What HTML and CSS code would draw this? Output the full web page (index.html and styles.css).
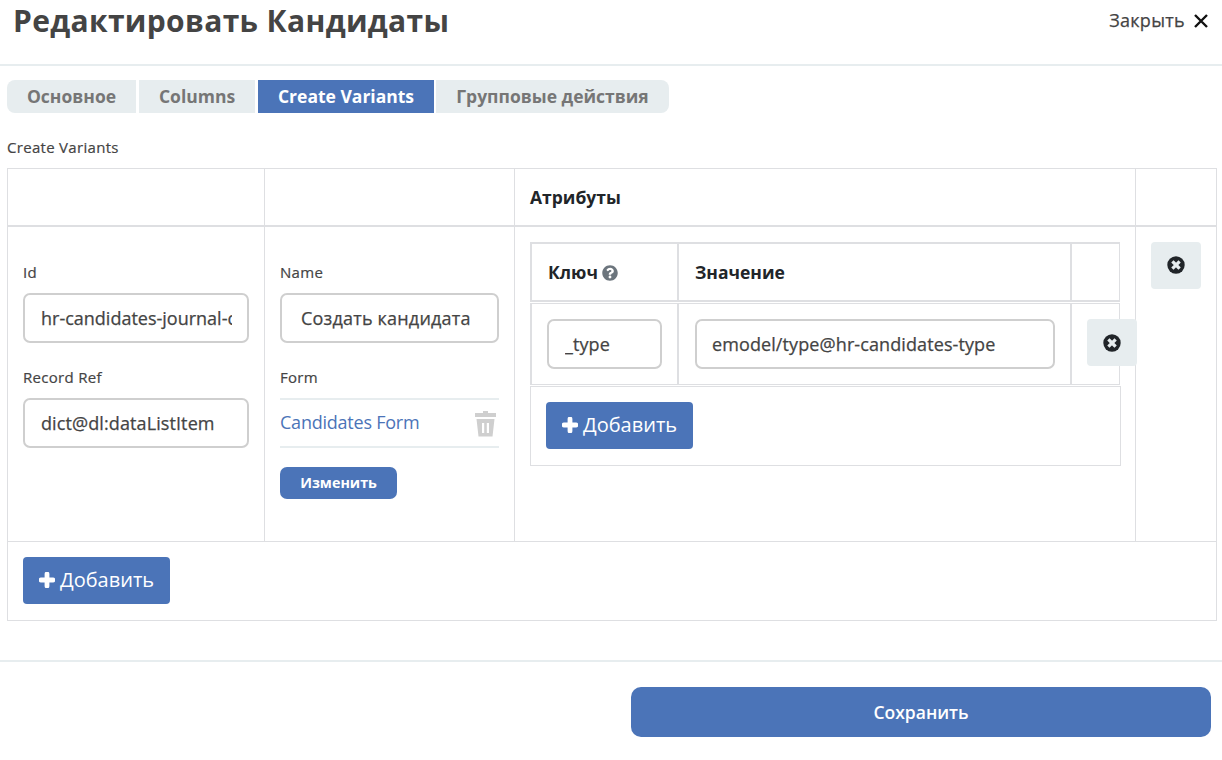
FILE: index.html
```html
<!DOCTYPE html>
<html lang="ru">
<head>
<meta charset="utf-8">
<title>Редактировать Кандидаты</title>
<link rel="stylesheet" href="styles.css">
</head>
<body>
<header class="head">
  <h1 class="title"><span>Редактировать Кандидаты</span></h1>
  <div class="close"><span class="close-text">Закрыть</span>
    <svg class="close-icon" width="14" height="14" viewBox="0 0 14 14"><path d="M1 1 13 13M13 1 1 13" stroke="#111" stroke-width="2.400" fill="none"/></svg>
  </div>
</header>
<nav class="tabs">
  <div class="tab t1"><span>Основное</span></div>
  <div class="tab t2"><span>Columns</span></div>
  <div class="tab t3 active"><span>Create Variants</span></div>
  <div class="tab t4"><span>Групповые действия</span></div>
</nav>
<main class="main">
  <div class="label caption"><span>Create Variants</span></div>
  <section class="grid">
    <div class="row row-head">
      <div class="cell"></div><div class="cell"></div>
      <div class="cell th"><span class="th-attr">Атрибуты</span></div><div class="cell"></div>
    </div>
    <div class="row row-body">
      <div class="cell form">
        <div class="label"><span>Id</span></div>
        <div class="input"><div class="clip"><span class="v-id">hr-candidates-journal-create</span></div></div>
        <div class="label"><span>Record Ref</span></div>
        <div class="input"><div class="clip"><span class="v-ref">dict@dl:dataListItem</span></div></div>
      </div>
      <div class="cell form">
        <div class="label"><span>Name</span></div>
        <div class="input name"><div class="clip"><span class="v-name">Создать кандидата</span></div></div>
        <div class="label"><span>Form</span></div>
        <div class="picked"><span class="link">Candidates Form</span>
          <svg class="trash" width="21" height="26" viewBox="0 0 21 26"><path fill="#cfcfcf" fill-rule="evenodd" d="M8 0h5v2h8v4H0V2h8zM1.500 8h18l-2 17.500h-14zM7 12v10h2.200V12zm4.800 0v10H14V12z"/></svg>
        </div>
        <div class="change"><span>Изменить</span></div>
      </div>
      <div class="cell attrs">
        <div class="inner">
          <div class="irow ihead">
            <div class="icell"><span class="th-key">Ключ</span>
              <svg class="help" width="16" height="16" viewBox="0 0 512 512"><path fill="#6c757d" d="M504 256c0 136.997-111.043 248-248 248S8 392.997 8 256C8 119.083 119.043 8 256 8s248 111.083 248 248zM262.655 90c-54.497 0-89.255 22.957-116.549 63.758-3.536 5.286-2.353 12.415 2.715 16.258l34.699 26.310c5.205 3.947 12.621 3.008 16.665-2.122 17.864-22.658 30.113-35.797 57.303-35.797 20.429 0 45.698 13.148 45.698 32.958 0 14.976-12.363 22.667-32.534 33.976C247.128 238.528 216 254.941 216 296v4c0 6.627 5.373 12 12 12h56c6.627 0 12-5.373 12-12v-1.333c0-28.462 83.186-29.647 83.186-106.667 0-58.002-60.165-102-116.531-102zM256 338c-25.365 0-46 20.635-46 46 0 25.364 20.635 46 46 46s46-20.636 46-46c0-25.365-20.635-46-46-46z"/></svg>
            </div>
            <div class="icell"><span class="th-val">Значение</span></div>
            <div class="icell"></div>
          </div>
          <div class="irow ibody">
            <div class="icell"><div class="input"><div class="clip"><span class="v-type">_type</span></div></div></div>
            <div class="icell value"><div class="input"><div class="clip"><span class="v-val">emodel/type@hr-candidates-type</span></div></div></div>
            <div class="icell"><div class="remove low"><svg width="18" height="18" viewBox="0 0 18 18"><circle cx="9" cy="9" r="8.700" fill="#212529"/><path d="M6.500 6.500l5 5M11.500 6.500l-5 5" stroke="#e7edef" stroke-width="3.200" stroke-linecap="square"/></svg></div></div>
          </div>
          <div class="ifoot"><div class="add"><svg width="16" height="16" viewBox="0 0 16 16"><path d="M8 2v12M2 8h12" stroke="#fff" stroke-width="4.800" stroke-linecap="round"/></svg><span>Добавить</span></div></div>
        </div>
      </div>
      <div class="cell attrs"><div class="remove"><svg width="18" height="18" viewBox="0 0 18 18"><circle cx="9" cy="9" r="8.700" fill="#212529"/><path d="M6.500 6.500l5 5M11.500 6.500l-5 5" stroke="#e7edef" stroke-width="3.200" stroke-linecap="square"/></svg></div></div>
    </div>
    <div class="row-foot"><div class="add"><svg width="16" height="16" viewBox="0 0 16 16"><path d="M8 2v12M2 8h12" stroke="#fff" stroke-width="4.800" stroke-linecap="round"/></svg><span>Добавить</span></div></div>
  </section>
</main>
<footer class="foot"><div class="save"><span>Сохранить</span></div></footer>
</body>
</html>
```
FILE: styles.css
```css
* { box-sizing: border-box; }
body { margin: 0; height: 760px; overflow: hidden; background: #fff; color: #444; font-family: "Open Sans", "Noto Sans", sans-serif; white-space: nowrap; }
svg { display: block; flex: none; }
.head { display: flex; justify-content: space-between; height: 66px; border-bottom: 2px solid #e7edef; padding: 0 14px 0 13px; }
.title { margin: 0; font-size: 30px; letter-spacing: .34px; line-height: 42px; font-weight: 700; }
.close { display: flex; align-items: center; gap: 9px; height: 40px; font-size: 18px; letter-spacing: .3px; -webkit-text-stroke: .25px currentColor; }
.close-icon { margin-top: 1px; }
.tabs { display: flex; padding: 14px 0 0 7px; }
.tab { height: 33px; line-height: 33px; text-align: center; background: #e7edef; color: #767676; font-size: 17.5px; font-weight: 700; margin-right: 3px; }
.t1 { width: 129px; border-radius: 8px 0 0 8px; }
.t2 { width: 116px; }
.t3 { width: 176px; margin-right: 2px; }
.t4 { width: 233px; border-radius: 0 8px 8px 0; }
.active { background: #4b74b8; color: #fff; }
.main { padding: 24px 5px 0 7px; }
.label { height: 21px; line-height: 21px; font-size: 15px; letter-spacing: .3px; -webkit-text-stroke: .2px currentColor; }
.caption { margin-bottom: 10px; }
.grid { width: 1210px; border: 1px solid #dedfe2; }
.row { display: grid; grid-template-columns: 256px 250px 621px 81px; }
.cell { border-left: 1px solid #dedfe2; min-width: 0; }
.cell:first-child { border-left: 0; }
.row-head { height: 58px; border-bottom: 2px solid #dedfe2; }
.th { padding-left: 15px; line-height: 57px; }
.th, .ihead { color: #212529; font-size: 17.5px; font-weight: 700; }
.row-body { height: 314px; }
.form { padding: 35px 15px 0; }
.input { height: 50px; border: 2px solid #cfcfcf; border-radius: 7px; padding: 0 15px 0 16px; font-size: 18px; line-height: 46px; letter-spacing: .1px; -webkit-text-stroke: .25px currentColor; }
.v-id { letter-spacing: 0; }
.clip { overflow: hidden; }
.form .input { margin: 10px 0 24px; }
.input.name { padding-left: 19px; letter-spacing: .2px; }
.picked { display: flex; justify-content: space-between; align-items: center; height: 50px; margin-top: 10px; border: solid #e7edef; border-width: 2px 0; color: #4b74b8; font-size: 18px; letter-spacing: -.23px; padding-right: 3px; }
.link { padding-bottom: 2px; }
.trash { margin-top: 2px; }
.change { width: 117px; height: 32px; margin-top: 19px; border-radius: 7px; background: #4b74b8; color: #fff; font-size: 14.3px; font-weight: 700; line-height: 31px; text-align: center; }
.attrs { padding: 15px; }
.inner { width: 591px; }
.irow { display: grid; grid-template-columns: 147px 393px 50px; width: 590px; border-right: 1px solid #dedfe2; }
.icell { min-width: 0; border-left: 2px solid #dedfe2; }
.ihead { height: 60px; border-top: 2px solid #dedfe2; border-bottom: 2px solid #dedfe2; line-height: 57px; }
.ihead .icell { display: flex; align-items: center; gap: 4px; padding-left: 16px; }
.ibody { height: 82px; margin-top: 1px; border-top: 1px solid #dedfe2; border-bottom: 1px solid #dedfe2; }
.ibody .icell { padding: 15px 15px 0; }
.ibody .value { padding-left: 16px; }
.value .input { padding-left: 15px; }
.ibody .icell:nth-child(3) { padding: 15px 0 0 15px; }
.remove { display: flex; align-items: center; justify-content: center; width: 50px; height: 47px; padding-bottom: 2px; border-radius: 4px; background: #e7edef; }
.remove.low { position: relative; padding-bottom: 0; }
.ifoot { height: 80px; margin-top: 1px; padding: 15px; border: 1px solid #dedfe2; }
.row-foot { height: 79px; border-top: 1px solid #dedfe2; padding: 15px; }
.add { display: flex; align-items: center; gap: 5px; width: 147px; height: 47px; padding: 0 0 2px 16px; border-radius: 4px; background: #4b74b8; color: #fff; font-size: 20px; }
.foot { display: flex; justify-content: flex-end; height: 100px; margin-top: 39px; border-top: 2px solid #e7edef; padding: 25px 11px 0; }
.save { width: 580px; height: 50px; border-radius: 10px; background: #4b74b8; color: #fff; font-size: 17.5px; font-weight: 600; line-height: 50px; text-align: center; }
```
